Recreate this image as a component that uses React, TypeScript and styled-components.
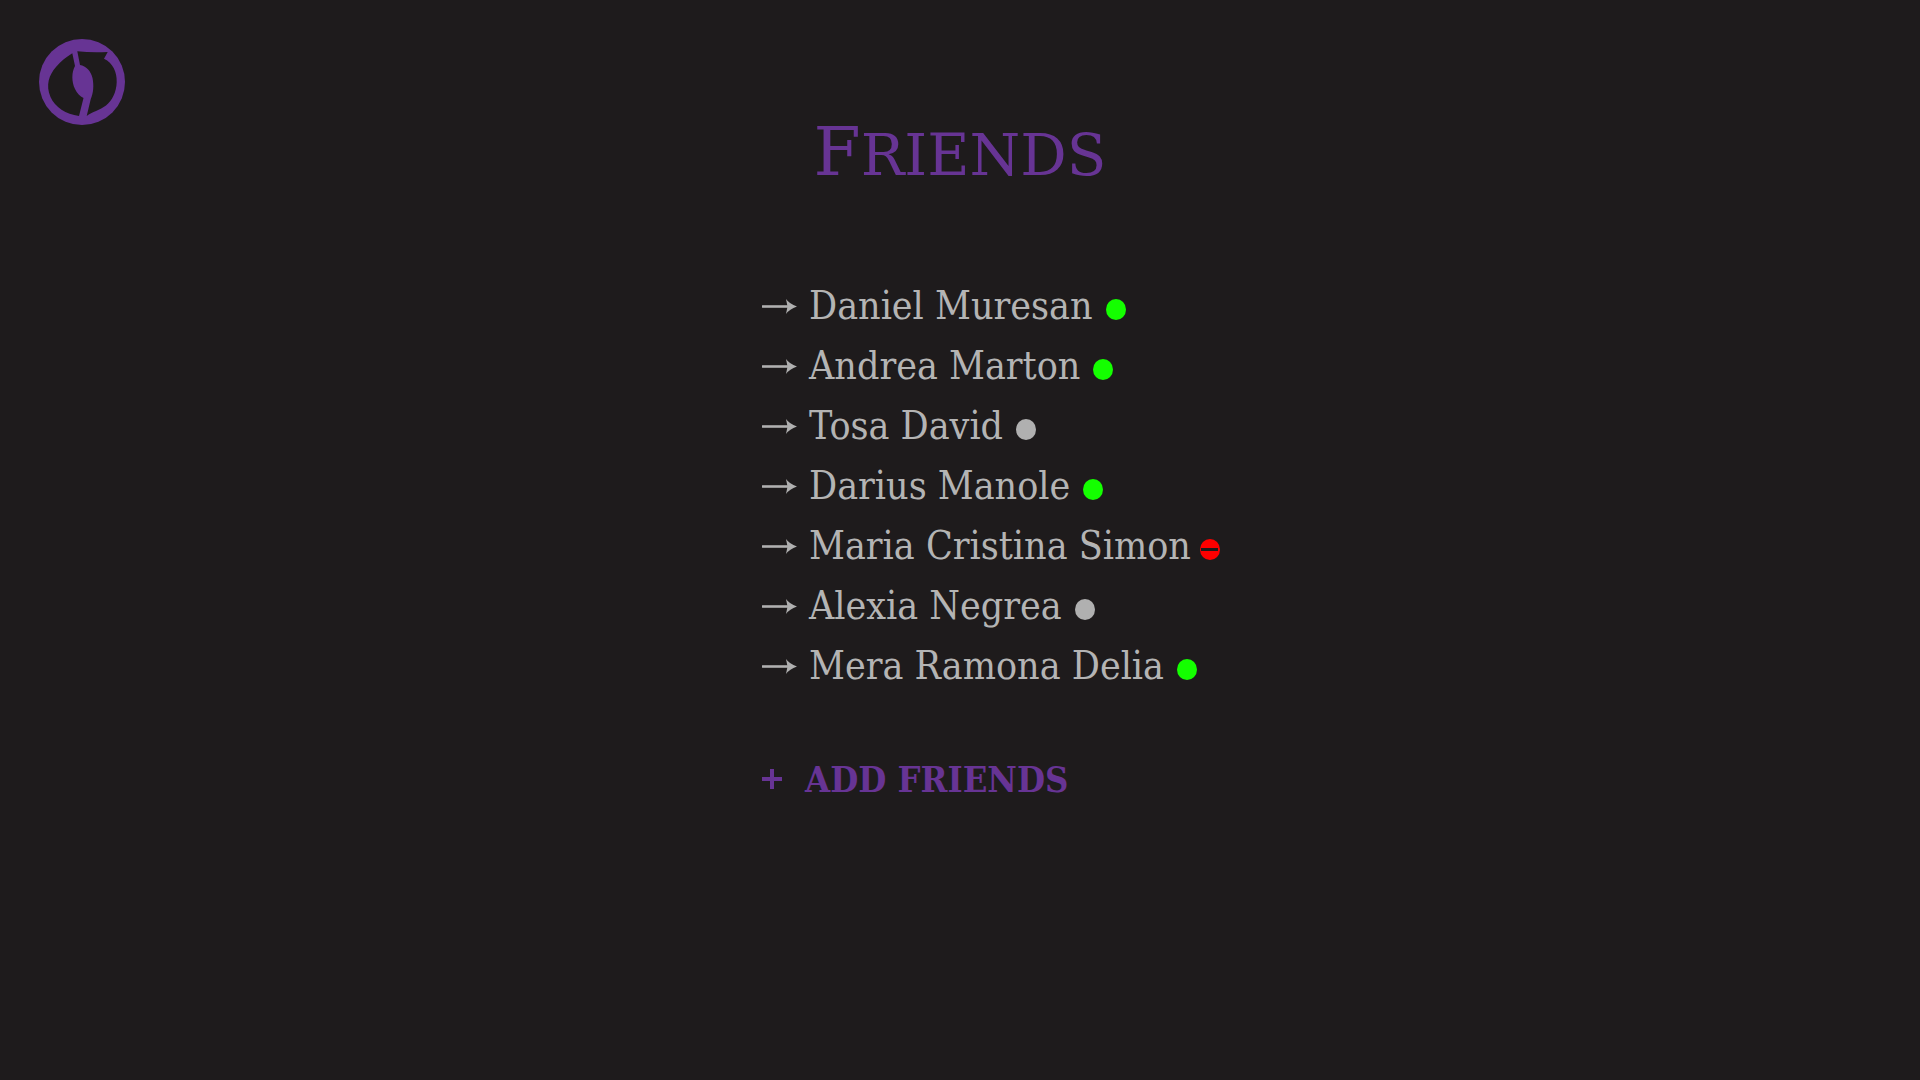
import React from "react";
import styled, { createGlobalStyle } from "styled-components";

const colors = {
  background: "#1e1b1c",
  accent: "#673494",
  text: "#b4b4b4",
  online: "#14ff00",
  offline: "#b0b0b0",
  busy: "#ff0000",
};

const bodyFont = `"DejaVu Serif Condensed", "Liberation Serif", serif`;

const GlobalStyle = createGlobalStyle`
  *, *::before, *::after { box-sizing: border-box; }
  body {
    margin: 0;
    background: ${colors.background};
    color: ${colors.text};
    font-family: ${bodyFont};
  }
`;

const Page = styled.div`
  min-height: 100vh;
`;

const Header = styled.header`
  display: grid;
  grid-template-columns: 1fr auto 1fr;
  align-items: start;
  padding: 39px 39px 0;
`;

const HomeLink = styled.a`
  display: block;
  width: 86px;
  height: 86px;
`;

const Title = styled.h1`
  margin: 0;
  padding-top: 73px;
  color: ${colors.accent};
  font-family: "DejaVu Serif", serif;
  font-size: 58px;
  font-weight: 400;
  line-height: 80px;
  text-transform: uppercase;

  &::first-letter {
    font-size: 68px;
  }
`;

const Content = styled.main`
  width: 396px;
  margin: 81px auto 0;
  white-space: nowrap;
`;

const FriendList = styled.ul`
  margin: 0;
  padding: 0;
  list-style: none;
`;

const FriendRow = styled.li`
  display: flex;
  align-items: center;
  width: max-content;
  height: 60px;
`;

const Name = styled.span`
  margin-left: 12px;
  font-size: 39px;
  line-height: 60px;
`;

type Status = "online" | "offline" | "busy";

const StatusDot = styled.span<{ $status: Status }>`
  display: flex;
  align-items: center;
  justify-content: center;
  width: 20px;
  height: 21px;
  margin-top: 6px;
  margin-left: ${({ $status }) => ($status === "busy" ? 9 : 13)}px;
  border-radius: 50%;
  background: ${({ $status }) => colors[$status]};
`;

const BusyBar = styled.span`
  width: 17px;
  height: 3px;
  background: ${colors.background};
`;

const AddButton = styled.button`
  display: flex;
  align-items: center;
  gap: 23px;
  margin-top: 53px;
  padding: 0;
  border: 0;
  background: none;
  color: ${colors.accent};
  font-family: ${bodyFont};
  font-size: 36px;
  font-weight: 700;
  line-height: 60px;
  cursor: pointer;
`;

const friends: { name: string; status: Status }[] = [
  { name: "Daniel Muresan", status: "online" },
  { name: "Andrea Marton", status: "online" },
  { name: "Tosa David", status: "offline" },
  { name: "Darius Manole", status: "online" },
  { name: "Maria Cristina Simon", status: "busy" },
  { name: "Alexia Negrea", status: "offline" },
  { name: "Mera Ramona Delia", status: "online" },
];

const Logo = () => (
  <svg width="86" height="86" viewBox="0 0 86 86" aria-hidden="true">
    <circle cx="43" cy="43" r="43" fill={colors.accent} />
    <path
      d="M33.3 14.3 L36 27 C32.5 33 32.5 43 36 50 C38 54 41 57.5 44.5 59 L40 77 C27 75 16 68.5 11.5 58 C6.5 46 10 36 17 28 C22 22 28 17.5 33.3 14.3 Z"
      fill={colors.background}
    />
    <path
      d="M38.3 12.3 Q53 14 68.7 13 L65 19.7 C74 24 78 33 77.7 43 C77.5 53 73 62 67 66.5 C61 71 53 73 47.7 77 L51.7 60.3 C54.5 54 55 46 53.5 39 C52 32 47 27 41 26 Z"
      fill={colors.background}
    />
  </svg>
);

const Arrow = () => (
  <svg width="35" height="15" viewBox="0 0 35 15" aria-hidden="true">
    <path d="M0 6.2 H26 V8.8 H0 Z" fill={colors.offline} />
    <path d="M24 0 Q27.5 5 35 7.5 Q27.5 10 24 15 L25.5 7.5 Z" fill={colors.offline} />
  </svg>
);

const Plus = () => (
  <svg width="20" height="20" viewBox="0 0 20 20" aria-hidden="true">
    <path d="M8 0 H12 V8 H20 V12 H12 V20 H8 V12 H0 V8 H8 Z" fill="currentColor" />
  </svg>
);

export default function App() {
  return (
    <Page>
      <GlobalStyle />
      <Header>
        <HomeLink href="#" aria-label="Home">
          <Logo />
        </HomeLink>
        <Title>Friends</Title>
      </Header>
      <Content>
        <FriendList>
          {friends.map(({ name, status }) => (
            <FriendRow key={name}>
              <Arrow />
              <Name>{name}</Name>
              <StatusDot $status={status} role="img" aria-label={status}>
                {status === "busy" && <BusyBar />}
              </StatusDot>
            </FriendRow>
          ))}
        </FriendList>
        <AddButton type="button">
          <Plus />
          ADD FRIENDS
        </AddButton>
      </Content>
    </Page>
  );
}
